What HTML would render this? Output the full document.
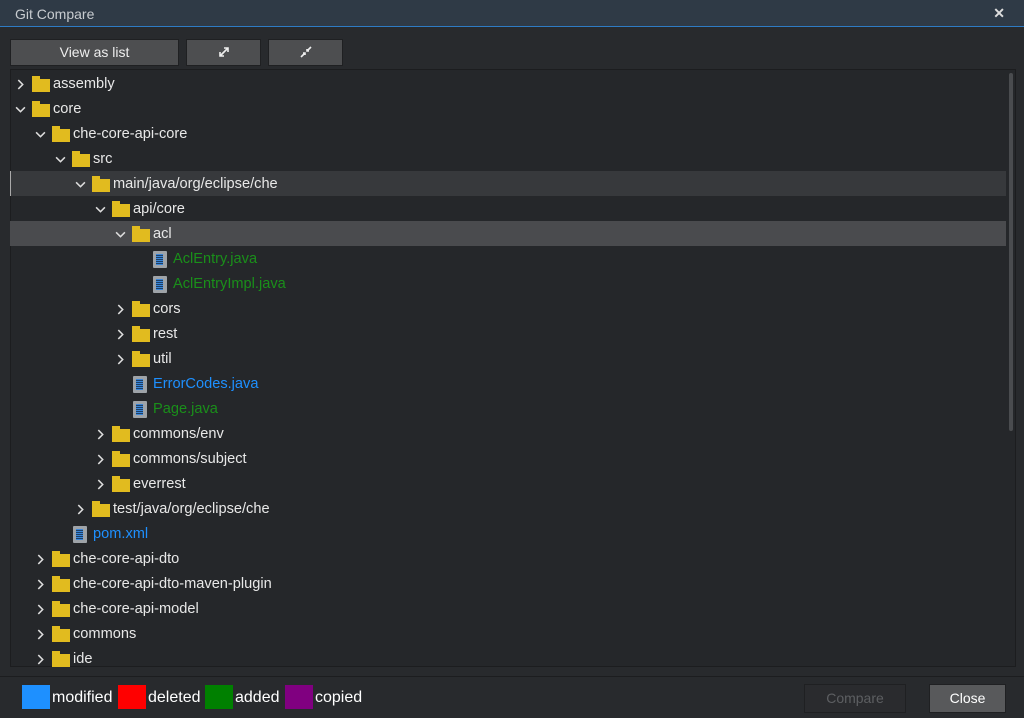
<!DOCTYPE html>
<html><head><style>
*{margin:0;padding:0;box-sizing:border-box}
body{width:1024px;height:718px;background:#282a2d;font-family:"Liberation Sans",sans-serif;position:relative;overflow:hidden;color:#e8e8e8}
.title{position:absolute;left:0;top:0;width:1024px;height:27px;background:#2f3a46;border-bottom:1px solid #2e7bc4;font-size:14px;color:#c8ccd0;padding:6px 0 0 15px}
.x{position:absolute;right:19px;top:5px;font-size:14px;font-weight:bold;color:#ddd}
.btn{position:absolute;top:39px;height:27px;background:#4d4e50;border:1px solid #1f2022;color:#eee;font-size:14px;text-align:center;line-height:25px}
.tree{position:absolute;left:10px;top:69px;width:1006px;height:598px;background:#25272a;border:1px solid #1c1d1f;overflow:hidden}
.row{position:absolute;left:0;width:996px;height:25px;font-size:14.6px;line-height:25px}
.row span{position:absolute;top:0}
.chev{position:absolute;top:7px;width:11px;height:11px}
.fold{position:absolute;top:7px;width:18px;height:13px;background:#e1bb1f}
.fold:before{content:"";position:absolute;left:0;top:-3px;width:8px;height:4px;background:#e1bb1f}
.file{position:absolute;top:4px;width:14px;height:17px;background:#9ea3a8;border-radius:1px}
.file:after{content:"";position:absolute;left:3px;top:3px;width:7px;height:11px;background:repeating-linear-gradient(#3b86d8 0 1px,#1c3f66 1px 2px)}
.scroll{position:absolute;left:998px;top:3px;width:4px;height:358px;background:#4a4c4f;border-radius:2px}
.leg{position:absolute;top:685px;height:24px;width:28px}
.lt{position:absolute;top:689px;font-size:16px;color:#fff}
.g{color:#1a8f1a}
.b{color:#1e90ff}
</style></head><body>
<div class="title">Git Compare<span class="x">✕</span></div>
<div class="btn" style="left:10px;width:169px">View as list</div>
<div class="btn" style="left:186px;width:75px"><svg width="14" height="14" viewBox="0 0 14 14" style="margin-top:5px"><path d="M3 11L11 3M7 3h4v4M3 7v4h4" stroke="#eee" stroke-width="1.6" fill="none"/></svg></div>
<div class="btn" style="left:268px;width:75px"><svg width="14" height="14" viewBox="0 0 14 14" style="margin-top:5px"><path d="M2 12L6 8M8 6L12 2M4 8h2v2M10 6H8V4" stroke="#eee" stroke-width="1.6" fill="none"/></svg></div>
<div class="tree">
<div class="scroll"></div>
</div>
<div class="leg" style="left:22px;background:#1e90ff"></div><span class="lt" style="left:52px">modified</span>
<div class="leg" style="left:118px;background:#ff0000"></div><span class="lt" style="left:148px">deleted</span>
<div class="leg" style="left:205px;background:#008000"></div><span class="lt" style="left:235px">added</span>
<div class="leg" style="left:285px;background:#800080"></div><span class="lt" style="left:315px">copied</span>
<div style="position:absolute;left:0;top:676px;width:1024px;height:1px;background:#1c1d1f"></div>
<div style="position:absolute;left:804px;top:684px;width:102px;height:29px;border:1px solid #1f2022;background:#2a2b2e;color:#5d5f62;font-size:14px;text-align:center;line-height:27px">Compare</div>
<div style="position:absolute;left:929px;top:684px;width:77px;height:29px;border:1px solid #1f2022;background:#58595b;color:#fff;font-size:14px;text-align:center;line-height:27px">Close</div>
<div class="tree" style="background:transparent;border:none">
<div class="row" style="top:3px"><svg class="chev" style="left:5px" viewBox="0 0 10 10"><path d="M3 1l4 4-4 4" stroke="#ddd" stroke-width="1.4" fill="none"/></svg><i class="fold" style="left:22px"></i><span style="left:43px">assembly</span></div>
<div class="row" style="top:28px"><svg class="chev" style="left:5px" viewBox="0 0 10 10"><path d="M1 3l4 4 4-4" stroke="#ddd" stroke-width="1.4" fill="none"/></svg><i class="fold" style="left:22px"></i><span style="left:43px">core</span></div>
<div class="row" style="top:53px"><svg class="chev" style="left:25px" viewBox="0 0 10 10"><path d="M1 3l4 4 4-4" stroke="#ddd" stroke-width="1.4" fill="none"/></svg><i class="fold" style="left:42px"></i><span style="left:63px">che-core-api-core</span></div>
<div class="row" style="top:78px"><svg class="chev" style="left:45px" viewBox="0 0 10 10"><path d="M1 3l4 4 4-4" stroke="#ddd" stroke-width="1.4" fill="none"/></svg><i class="fold" style="left:62px"></i><span style="left:83px">src</span></div>
<div class="row" style="top:102px;height:25px;background:#37393c;border-left:1px solid #aaa"><svg class="chev" style="left:64px;top:8px" viewBox="0 0 10 10"><path d="M1 3l4 4 4-4" stroke="#ddd" stroke-width="1.4" fill="none"/></svg><i class="fold" style="left:81px;top:8px"></i><span style="left:102px;top:1px">main/java/org/eclipse/che</span></div>
<div class="row" style="top:128px"><svg class="chev" style="left:85px" viewBox="0 0 10 10"><path d="M1 3l4 4 4-4" stroke="#ddd" stroke-width="1.4" fill="none"/></svg><i class="fold" style="left:102px"></i><span style="left:123px">api/core</span></div>
<div class="row" style="top:152px;background:#4a4b4e"><svg class="chev" style="left:105px;top:8px" viewBox="0 0 10 10"><path d="M1 3l4 4 4-4" stroke="#ddd" stroke-width="1.4" fill="none"/></svg><i class="fold" style="left:122px;top:8px"></i><span style="left:143px;top:1px">acl</span></div>
<div class="row" style="top:178px"><i class="file" style="left:143px"></i><span class="g" style="left:163px">AclEntry.java</span></div>
<div class="row" style="top:203px"><i class="file" style="left:143px"></i><span class="g" style="left:163px">AclEntryImpl.java</span></div>
<div class="row" style="top:228px"><svg class="chev" style="left:105px" viewBox="0 0 10 10"><path d="M3 1l4 4-4 4" stroke="#ddd" stroke-width="1.4" fill="none"/></svg><i class="fold" style="left:122px"></i><span style="left:143px">cors</span></div>
<div class="row" style="top:253px"><svg class="chev" style="left:105px" viewBox="0 0 10 10"><path d="M3 1l4 4-4 4" stroke="#ddd" stroke-width="1.4" fill="none"/></svg><i class="fold" style="left:122px"></i><span style="left:143px">rest</span></div>
<div class="row" style="top:278px"><svg class="chev" style="left:105px" viewBox="0 0 10 10"><path d="M3 1l4 4-4 4" stroke="#ddd" stroke-width="1.4" fill="none"/></svg><i class="fold" style="left:122px"></i><span style="left:143px">util</span></div>
<div class="row" style="top:303px"><i class="file" style="left:123px"></i><span class="b" style="left:143px">ErrorCodes.java</span></div>
<div class="row" style="top:328px"><i class="file" style="left:123px"></i><span class="g" style="left:143px">Page.java</span></div>
<div class="row" style="top:353px"><svg class="chev" style="left:85px" viewBox="0 0 10 10"><path d="M3 1l4 4-4 4" stroke="#ddd" stroke-width="1.4" fill="none"/></svg><i class="fold" style="left:102px"></i><span style="left:123px">commons/env</span></div>
<div class="row" style="top:378px"><svg class="chev" style="left:85px" viewBox="0 0 10 10"><path d="M3 1l4 4-4 4" stroke="#ddd" stroke-width="1.4" fill="none"/></svg><i class="fold" style="left:102px"></i><span style="left:123px">commons/subject</span></div>
<div class="row" style="top:403px"><svg class="chev" style="left:85px" viewBox="0 0 10 10"><path d="M3 1l4 4-4 4" stroke="#ddd" stroke-width="1.4" fill="none"/></svg><i class="fold" style="left:102px"></i><span style="left:123px">everrest</span></div>
<div class="row" style="top:428px"><svg class="chev" style="left:65px" viewBox="0 0 10 10"><path d="M3 1l4 4-4 4" stroke="#ddd" stroke-width="1.4" fill="none"/></svg><i class="fold" style="left:82px"></i><span style="left:103px">test/java/org/eclipse/che</span></div>
<div class="row" style="top:453px"><i class="file" style="left:63px"></i><span class="b" style="left:83px">pom.xml</span></div>
<div class="row" style="top:478px"><svg class="chev" style="left:25px" viewBox="0 0 10 10"><path d="M3 1l4 4-4 4" stroke="#ddd" stroke-width="1.4" fill="none"/></svg><i class="fold" style="left:42px"></i><span style="left:63px">che-core-api-dto</span></div>
<div class="row" style="top:503px"><svg class="chev" style="left:25px" viewBox="0 0 10 10"><path d="M3 1l4 4-4 4" stroke="#ddd" stroke-width="1.4" fill="none"/></svg><i class="fold" style="left:42px"></i><span style="left:63px">che-core-api-dto-maven-plugin</span></div>
<div class="row" style="top:528px"><svg class="chev" style="left:25px" viewBox="0 0 10 10"><path d="M3 1l4 4-4 4" stroke="#ddd" stroke-width="1.4" fill="none"/></svg><i class="fold" style="left:42px"></i><span style="left:63px">che-core-api-model</span></div>
<div class="row" style="top:553px"><svg class="chev" style="left:25px" viewBox="0 0 10 10"><path d="M3 1l4 4-4 4" stroke="#ddd" stroke-width="1.4" fill="none"/></svg><i class="fold" style="left:42px"></i><span style="left:63px">commons</span></div>
<div class="row" style="top:578px"><svg class="chev" style="left:25px" viewBox="0 0 10 10"><path d="M3 1l4 4-4 4" stroke="#ddd" stroke-width="1.4" fill="none"/></svg><i class="fold" style="left:42px"></i><span style="left:63px">ide</span></div>
</div>
</body></html>
